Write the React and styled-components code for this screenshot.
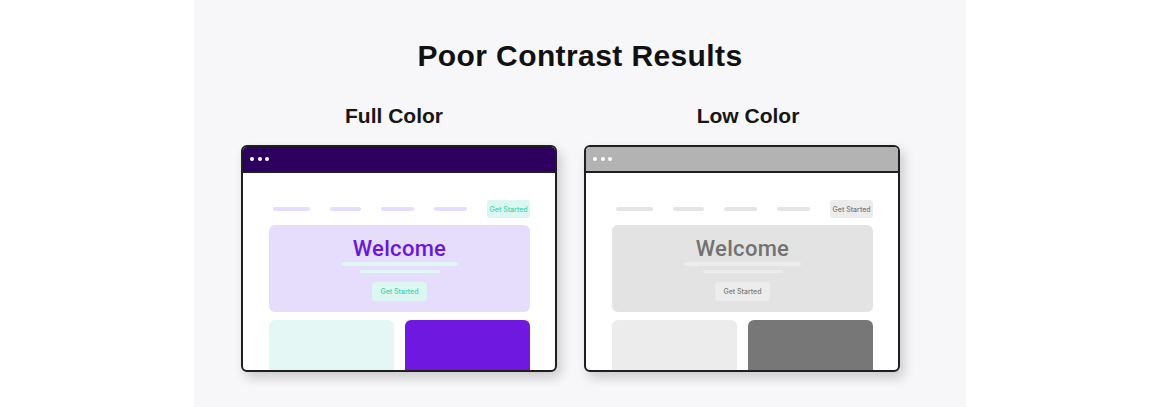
import styled, { createGlobalStyle } from "styled-components";

const GlobalStyle = createGlobalStyle`
  html, body {
    margin: 0;
    padding: 0;
    background: #ffffff;
  }
  body {
    font-family: "Liberation Sans", Arial, sans-serif;
  }
`;

const full = {
  bar: "#2d0060",
  line: "#e6dcfb",
  btnBg: "#dcf7f1",
  btnText: "#3fd3ae",
  hero: "#e6dcfb",
  welcome: "#6a16dc",
  heroLine: "#e2f7f3",
  cardA: "#e5f7f4",
  cardB: "#6f18e0",
};

const low = {
  bar: "#b3b3b3",
  line: "#e4e4e4",
  btnBg: "#ececec",
  btnText: "#7a7a7a",
  hero: "#e3e3e3",
  welcome: "#727272",
  heroLine: "#ececec",
  cardA: "#ececec",
  cardB: "#777777",
};

const Panel = styled.div`
  width: 772px;
  height: 407px;
  margin: 0 auto;
  background: #f7f7f9;
  display: flex;
  flex-direction: column;
  align-items: center;
  overflow: hidden;
`;

const Title = styled.h1`
  margin: 39px 0 0;
  font-size: 30px;
  line-height: 34px;
  font-weight: 700;
  letter-spacing: 0.4px;
  color: #111111;
`;

const Columns = styled.div`
  margin-top: 31px;
  align-self: flex-start;
  margin-left: 47px;
  display: grid;
  grid-template-columns: 316px 316px;
  column-gap: 27px;
`;

const Column = styled.div`
  display: flex;
  flex-direction: column;
  align-items: center;
`;

const Label = styled.h2`
  margin: 0 0 17px;
  transform: translateX(${(p) => p.$shift}px);
  font-size: 21px;
  line-height: 24px;
  font-weight: 700;
  color: #161616;
`;

const Window = styled.div`
  width: 316px;
  height: 227px;
  box-sizing: border-box;
  border: 2px solid #1e1e1e;
  border-radius: 6px;
  background: #ffffff;
  overflow: hidden;
  box-shadow: 4px 6px 12px rgba(0, 0, 0, 0.18);
  display: flex;
  flex-direction: column;
`;

const TitleBar = styled.div`
  height: 24px;
  flex-shrink: 0;
  background: ${(p) => p.$c.bar};
  border-bottom: 2px solid #1e1e1e;
  display: flex;
  align-items: center;
  gap: 3.5px;
  padding-left: 7px;
`;

const Dot = styled.span`
  width: 4px;
  height: 4px;
  border-radius: 50%;
  background: #ffffff;
`;

const Content = styled.div`
  padding: 27px 25px 0 26px;
`;

const Nav = styled.div`
  display: flex;
  align-items: center;
  gap: 20px;
  padding-left: 4px;
`;

const NavLine = styled.span`
  width: ${(p) => p.$w}px;
  height: 3.5px;
  border-radius: 2px;
  background: ${(p) => p.$c.line};
`;

const Button = styled.span`
  display: flex;
  align-items: center;
  justify-content: center;
  width: ${(p) => p.$w}px;
  height: ${(p) => p.$h}px;
  margin-top: ${(p) => p.$top || 0}px;
  margin-left: ${(p) => (p.$push ? "auto" : "0")};
  border-radius: 3px;
  background: ${(p) => p.$c.btnBg};
  color: ${(p) => p.$c.btnText};
  font-family: Inter, "Liberation Sans", sans-serif;
  font-size: 7px;
  font-weight: 500;
`;

const Hero = styled.div`
  margin-top: 7px;
  height: 87px;
  box-sizing: border-box;
  padding-top: 11px;
  border-radius: 6px;
  background: ${(p) => p.$c.hero};
  display: flex;
  flex-direction: column;
  align-items: center;
`;

const Welcome = styled.div`
  font-family: Roboto, "Liberation Sans", sans-serif;
  font-size: 22px;
  line-height: 26px;
  font-weight: 500;
  letter-spacing: 0.3px;
  color: ${(p) => p.$c.welcome};
`;

const HeroLine = styled.span`
  width: ${(p) => p.$w}px;
  height: 3.5px;
  margin-top: ${(p) => p.$top}px;
  border-radius: 2px;
  background: ${(p) => p.$c.heroLine};
`;

const Cards = styled.div`
  margin-top: 8px;
  display: grid;
  grid-template-columns: 125px 125px;
  column-gap: 11px;
`;

const Card = styled.div`
  height: 70px;
  border-radius: 6px;
  background: ${(p) => p.$bg};
`;

const Mockup = ({ c }) => (
  <Window>
    <TitleBar $c={c}>
      <Dot />
      <Dot />
      <Dot />
    </TitleBar>
    <Content>
      <Nav>
        <NavLine $c={c} $w={39} />
        <NavLine $c={c} $w={32} />
        <NavLine $c={c} $w={35} />
        <NavLine $c={c} $w={35} />
        <Button $c={c} $w={45} $h={18} $push>
          Get Started
        </Button>
      </Nav>
      <Hero $c={c}>
        <Welcome $c={c}>Welcome</Welcome>
        <HeroLine $c={c} $w={117} $top={0} />
        <HeroLine $c={c} $w={80} $top={4} />
        <Button $c={c} $w={55} $h={19} $top={9}>
          Get Started
        </Button>
      </Hero>
      <Cards>
        <Card $bg={c.cardA} />
        <Card $bg={c.cardB} />
      </Cards>
    </Content>
  </Window>
);

export default function App() {
  return (
    <>
      <GlobalStyle />
      <Panel>
        <Title>Poor Contrast Results</Title>
        <Columns>
          <Column>
            <Label $shift={-5}>Full Color</Label>
            <Mockup c={full} />
          </Column>
          <Column>
            <Label $shift={6}>Low Color</Label>
            <Mockup c={low} />
          </Column>
        </Columns>
      </Panel>
    </>
  );
}
